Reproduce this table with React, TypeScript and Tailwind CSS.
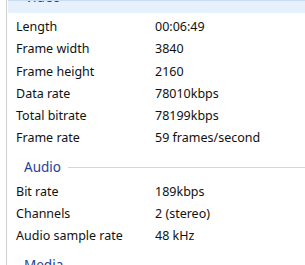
import React from 'react';

type Row = [string, string];

const video: Row[] = [
  ['Length', '00:06:49'],
  ['Frame width', '3840'],
  ['Frame height', '2160'],
  ['Data rate', '78010kbps'],
  ['Total bitrate', '78199kbps'],
  ['Frame rate', '59 frames/second'],
];

const audio: Row[] = [
  ['Bit rate', '189kbps'],
  ['Channels', '2 (stereo)'],
  ['Audio sample rate', '48 kHz'],
];

const PropRow = ({ label, value }: { label: string; value: string }) => (
  <div className="flex h-[22.3px] leading-[22.3px] text-[12.5px] text-[#111]">
    <span className="w-[148px] pl-[9px] shrink-0">{label}</span>
    <span>{value}</span>
  </div>
);

const GroupHeader = ({ title }: { title: string }) => (
  <div className="mt-[4px] mb-[1px] flex h-[26px] items-center pl-[17px]">
    <span className="leading-[26px] text-[13.5px] text-[#1f3f99]">{title}</span>
    <div className="ml-[7px] mt-[2px] h-px flex-1 bg-[#cdd7e6]" />
  </div>
);

export default function App() {
  return (
    <div className="h-[265px] w-[305px] overflow-hidden bg-white font-['Noto_Sans',sans-serif]">
      <div className="ml-[6px] flex h-full flex-col border-l border-[#cfcfcf]">
        {/* selected group header, scrolled mostly out of view */}
        <div className="ml-px h-[13px] shrink-0 overflow-hidden border-t border-[#c9dcf3] bg-[#e6f1fc] pl-[17px]">
          <div className="-mt-[17px] leading-[26px] text-[13.5px] text-[#1f3f99]">Video</div>
        </div>
        <div className="h-[3px] shrink-0" />
        {video.map(([l, v]) => (
          <PropRow key={l} label={l} value={v} />
        ))}
        <GroupHeader title="Audio" />
        {audio.map(([l, v]) => (
          <PropRow key={l} label={l} value={v} />
        ))}
        <GroupHeader title="Media" />
      </div>
    </div>
  );
}
